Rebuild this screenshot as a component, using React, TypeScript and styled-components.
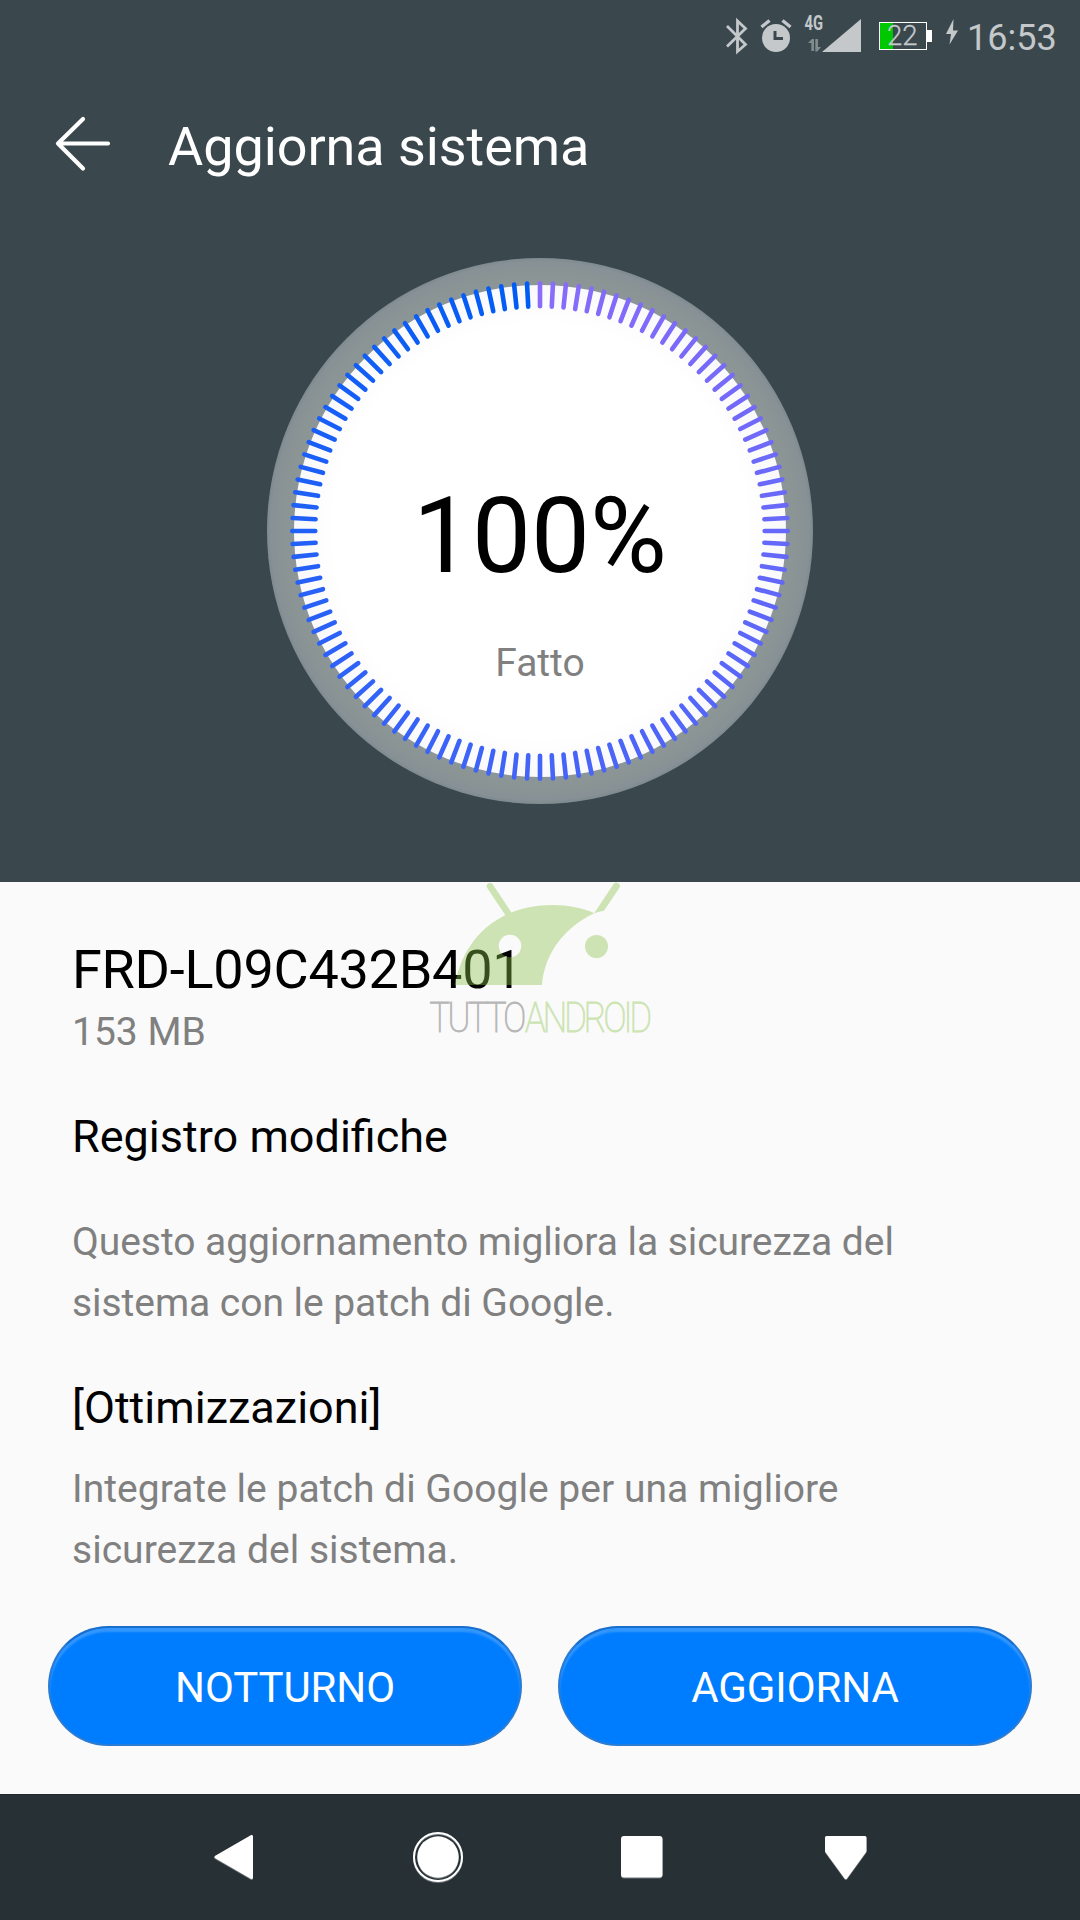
import React from "react";
import styled, { createGlobalStyle } from "styled-components";

const Global = createGlobalStyle`
  * { box-sizing: border-box; }
  body { margin: 0; background: #fafafa; }
`;

const Screen = styled.main`
  width: 1080px;
  height: 1920px;
  display: flex;
  flex-direction: column;
  overflow: hidden;
  background: #fafafa;
  font-family: Roboto, "Liberation Sans", sans-serif;
`;

const Hero = styled.section`
  height: 882px;
  background: #3a484e;
  display: flex;
  flex-direction: column;
`;

const StatusBar = styled.div`
  height: 72px;
  flex: none;
  display: flex;
  justify-content: flex-end;
  padding-right: 24px;
  color: #c4c8cb;
`;

const StatusIcons = styled.svg`
  width: 260px;
  height: 72px;
  flex: none;
  text { font-family: Roboto, sans-serif; }
`;

const Clock = styled.time`
  width: 89px;
  margin-left: -1px;
  flex: none;
  font-size: 36px;
  line-height: 76px;
  white-space: nowrap;
`;

const TitleBar = styled.header`
  height: 144px;
  flex: none;
  display: flex;
  align-items: center;
  padding-left: 54px;
  gap: 54px;
`;

const BackIcon = styled.svg`
  width: 60px;
  height: 60px;
  flex: none;
`;

const Title = styled.h1`
  margin: 5px 0 0;
  color: #fff;
  font-size: 54px;
  line-height: 64px;
  font-weight: 400;
  letter-spacing: -0.08px;
  white-space: nowrap;
`;

const Dial = styled.div`
  display: grid;
  width: 546px;
  height: 546px;
  margin: 42px auto 0;
  > * { grid-area: 1 / 1; }
`;

const DialReadout = styled.div`
  display: flex;
  flex-direction: column;
  align-items: center;
`;

const Percent = styled.div`
  margin-top: 217px;
  font-size: 105px;
  line-height: 124px;
  color: #000;
`;

const State = styled.div`
  margin-top: 41px;
  font-size: 39px;
  line-height: 46px;
  color: #808080;
`;

const Details = styled.section`
  position: relative;
  height: 744px;
  padding: 56px 72px 0;
  display: flex;
  flex-direction: column;
`;

const Text = styled.div<{ $size: number; $line: number; $muted?: boolean; $top?: number; $track?: number }>`
  margin-top: ${(p) => p.$top ?? 0}px;
  font-size: ${(p) => p.$size}px;
  line-height: ${(p) => p.$line}px;
  letter-spacing: ${(p) => (p.$track ? `${p.$track}px` : "normal")};
  color: ${(p) => (p.$muted ? "#808080" : "#000")};
  white-space: nowrap;
`;

const Watermark = styled.svg`
  position: absolute;
  left: 420px;
  top: 0;
  width: 240px;
  height: 160px;
  overflow: visible;
  text { font-family: Roboto, sans-serif; font-weight: 100; }
`;

const Actions = styled.div`
  height: 168px;
  padding: 0 48px;
  display: grid;
  grid-template-columns: 1fr 1fr;
  gap: 36px;
  align-items: start;
`;

const ActionButton = styled.button`
  height: 120px;
  padding: 3px 0 0;
  border: 2px solid #2a7bd4;
  border-top-color: #1a6ecb;
  border-radius: 60px;
  background: #007dff;
  box-shadow: inset 0 4px 2px #3397ff;
  color: #fff;
  font-family: inherit;
  font-size: 42px;
  line-height: 50px;
  letter-spacing: -0.1px;
`;

const NavBar = styled.nav`
  height: 126px;
  flex: none;
  display: flex;
  justify-content: center;
  gap: 144px;
  padding-top: 32px;
  background: #263035;
  border-top: 1px solid #1f282c;
`;

const NavIcon = styled.svg`
  width: 60px;
  height: 60px;
  fill: #fff;
  stroke-linejoin: round;
  filter: drop-shadow(0 1px 0.5px rgba(255, 255, 255, 0.35));
`;

const TICKS = 120;

function tickColor(i: number) {
  const t = i / (TICKS - 1);
  const mix = (a: number, b: number) => Math.round(a + (b - a) * t);
  return `rgb(${mix(137, 0)}, ${mix(108, 92)}, ${mix(250, 245)})`;
}

function Ring() {
  return (
    <svg width="546" height="546" viewBox="-273 -273 546 546">
      <defs>
        <radialGradient id="rim" gradientUnits="userSpaceOnUse" cx="0" cy="0" r="273">
          <stop offset="0.9" stopColor="#8c9697" />
          <stop offset="0.95" stopColor="#8a9495" />
          <stop offset="0.985" stopColor="#879196" />
          <stop offset="1" stopColor="#7f8b90" />
        </radialGradient>
        <radialGradient id="face" gradientUnits="userSpaceOnUse" cx="0" cy="0" r="246">
          <stop offset="0.84" stopColor="#fff" />
          <stop offset="1" stopColor="#f9f9fb" />
        </radialGradient>
      </defs>
      <circle r="273" fill="url(#rim)" />
      <circle r="246" fill="url(#face)" />
      {Array.from({ length: TICKS }, (_, i) => (
        <line
          key={i}
          y1="-247.8"
          y2="-224.7"
          stroke={tickColor(i)}
          strokeWidth="4.6"
          strokeLinecap="round"
          transform={`rotate(${i * 3})`}
        />
      ))}
    </svg>
  );
}

export default function App() {
  return (
    <Screen>
      <Global />
      <Hero>
        <StatusBar>
          <StatusIcons viewBox="708 0 260 72" fill="#c4c8cb">
            <path d="M727 26 L745.5 44.5 L737.5 51.5 V21 L745.5 28.5 L727 46.5" fill="none" stroke="#c4c8cb" strokeWidth="2.8" />
            <circle cx="776" cy="38" r="14" />
            <path d="M761.5 27 L769.5 20.5 M782.5 20.5 L790.5 27" stroke="#c4c8cb" strokeWidth="3.4" />
            <path d="M775 31 V38.5 H783" fill="none" stroke="#3a484e" strokeWidth="3" />
            <text x="804.5" y="30" fontSize="20.5" fontWeight="700" textLength="18.5" lengthAdjust="spacingAndGlyphs">4G</text>
            <path d="M808 43 L812 39 H814 V51 H811.3 V43Z M815.3 39 H818 V47 H821 L817.3 51.5 H815.3Z" fill="#7f8b8c" />
            <path d="M861 19 V52 H822Z" />
            <rect x="880" y="23" width="13" height="26.5" fill="#00c800" />
            <rect x="879.5" y="22.5" width="47" height="27" fill="none" stroke="#fff" />
            <rect x="927" y="30" width="5" height="12" fill="#fff" />
            <text x="887" y="45.2" fontSize="28" fontWeight="300" stroke="#c4c8cb" strokeWidth="0.3" textLength="30.5" lengthAdjust="spacingAndGlyphs">22</text>
            <path d="M953.5 19 L946 34 H951 L949.5 44.5 L958 30.5 H953Z" />
          </StatusIcons>
          <Clock>16:53</Clock>
        </StatusBar>
        <TitleBar>
          <BackIcon viewBox="0 0 60 60" fill="none" stroke="#fff" strokeWidth="4.2" strokeLinecap="round" strokeLinejoin="round">
            <path d="M29 5 L4 29.5 L29 54.5 M4 29.5 H54" />
          </BackIcon>
          <Title>Aggiorna sistema</Title>
        </TitleBar>
        <Dial>
          <Ring />
          <DialReadout>
            <Percent>100%</Percent>
            <State>Fatto</State>
          </DialReadout>
        </Dial>
      </Hero>
      <Details>
        <Text $size={54} $line={64} $track={-0.25}>FRD-L09C432B401</Text>
        <Text $size={39} $line={46} $muted $top={7}>153 MB</Text>
        <Text $size={45} $line={54} $top={55}>Registro modifiche</Text>
        <Text $size={39} $line={61} $muted $top={48} $track={-0.05}>
          Questo aggiornamento migliora la sicurezza del<br />sistema con le patch di Google.
        </Text>
        <Text $size={45} $line={54} $top={47}>[Ottimizzazioni]</Text>
        <Text $size={39} $line={61} $muted $top={24} $track={0.03}>
          Integrate le patch di Google per una migliore<br />sicurezza del sistema.
        </Text>
        <Watermark viewBox="420 882 240 160">
          <defs>
            <mask id="eye" maskUnits="userSpaceOnUse" x="420" y="882" width="240" height="160">
              <rect x="420" y="882" width="240" height="160" fill="#fff" />
              <circle cx="510" cy="946" r="11.2" fill="#000" />
            </mask>
          </defs>
          <g fill="#8bc34a" opacity="0.4">
            <path d="M455 985 C464 935 501 905 553 905 C568 905 583 908 594.3 913.2 C561 929 544 957 542 985Z" mask="url(#eye)" />
            <circle cx="596.5" cy="946.5" r="11.5" />
            <path d="M490 886.2 L510.5 917" fill="none" stroke="#8bc34a" strokeWidth="6.6" strokeLinecap="round" />
            <path d="M594.3 912.9 L613.4 884.2 A3.5 3.5 0 0 1 619.3 888 L604 910.7 Q599 911.3 594.3 913.2Z" />
          </g>
          <g fontSize="42" strokeWidth="1">
            <text transform="translate(429.5 1031.5) scale(0.82 1)" fill="#b7b7b7" stroke="#b7b7b7" textLength="118" lengthAdjust="spacing">TUTTO</text>
            <text transform="translate(525 1031.5) scale(0.82 1)" fill="#cde4b4" stroke="#cde4b4" textLength="155" lengthAdjust="spacing">ANDROID</text>
          </g>
        </Watermark>
      </Details>
      <Actions>
        <ActionButton>NOTTURNO</ActionButton>
        <ActionButton>AGGIORNA</ActionButton>
      </Actions>
      <NavBar>
        <NavIcon viewBox="0 0 60 60">
          <path d="M12 30 L47.5 9.5 V50.5Z" stroke="#fff" strokeWidth="3" />
        </NavIcon>
        <NavIcon viewBox="0 0 60 60">
          <circle cx="30" cy="30" r="24" fill="none" stroke="#fff" strokeWidth="2" />
          <circle cx="30" cy="30" r="20.7" />
        </NavIcon>
        <NavIcon viewBox="0 0 60 60">
          <rect x="9" y="9" width="41.5" height="41.5" rx="3" />
        </NavIcon>
        <NavIcon viewBox="0 0 60 60">
          <path d="M10.5 10.5 H49 V24 L29.8 50.5 L10.5 24Z" stroke="#fff" strokeWidth="3" />
        </NavIcon>
      </NavBar>
    </Screen>
  );
}
